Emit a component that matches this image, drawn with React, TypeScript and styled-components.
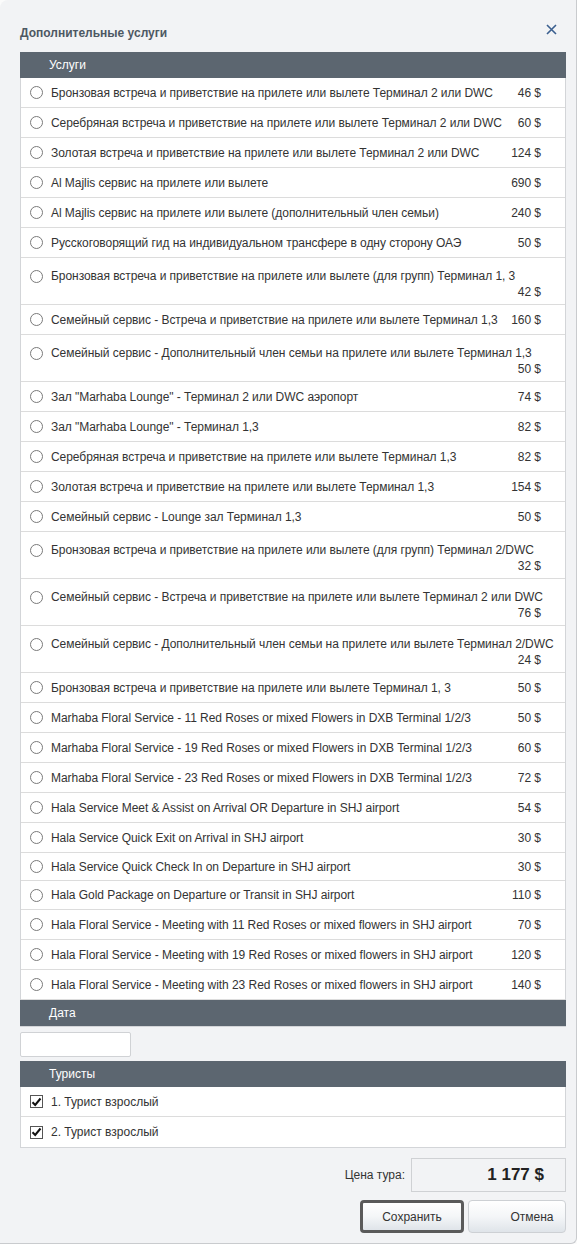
import React from "react";
import styled, { createGlobalStyle } from "styled-components";

const Global = createGlobalStyle`
  html, body { margin: 0; padding: 0; background: #fbfbfb; }
  * { box-sizing: border-box; }
  body { font-family: "Liberation Sans", Arial, sans-serif; font-size: 12px; color: #333; }
`;

const Dialog = styled.div`
  width: 577px;
  height: 1244px;
  background: #f2f3f5;
  border: 1px solid #c9cbce;
  border-top: none;
  border-left: none;
  border-radius: 8px 0 6px 0;
  padding: 0 10px 0 20px;
  display: flex;
  flex-direction: column;
`;

const TitleBar = styled.div`
  height: 52px;
  display: flex;
  align-items: center;
  justify-content: space-between;
  padding-top: 14px;
`;

const Title = styled.div`
  font-weight: bold;
  font-size: 12px;
  color: #4d5863;
`;

const Close = styled.button`
  border: none;
  background: none;
  padding: 0;
  margin: 0 8px 8px 0;
  width: 14px;
  height: 14px;
  display: flex;
  align-items: center;
  justify-content: center;
  cursor: pointer;
`;

const Panel = styled.div`
  background: #fff;
  border: 1px solid #d3d5d8;
  border-top: none;
`;

const SectionBar = styled.div`
  height: 26px;
  background: #5c6670;
  color: #fff;
  display: flex;
  align-items: center;
  padding-left: 29px;
  font-size: 12px;
  margin: 0 -1px;
`;

const Row = styled.label<{ $wrapped?: boolean; $h?: number }>`
  display: grid;
  grid-template-columns: 13px minmax(0, 1fr) auto;
  column-gap: 8px;
  align-items: ${(p) => (p.$wrapped ? "start" : "center")};
  align-content: ${(p) => (p.$wrapped ? "start" : "center")};
  height: ${(p) => (p.$h ? `${p.$h}px` : p.$wrapped ? "47px" : "30px")};
  padding: ${(p) => (p.$wrapped ? "10px 24px 0 9px" : "0 24px 0 9px")};
  border-bottom: 1px solid #dcdcdc;
  line-height: 16px;
  letter-spacing: -0.05px;
  cursor: pointer;
  &:last-child { border-bottom: none; }
`;

const RadioWrap = styled.span`
  display: flex;
  align-items: center;
  height: 16px;
`;

const Radio = styled.span`
  width: 13px;
  height: 13px;
  border-radius: 50%;
  border: 1px solid #7a7a7a;
  background: #fff;
`;

const Label = styled.span`
  white-space: nowrap;
  color: #333;
  overflow: visible;
`;

const Price = styled.span<{ $wrapped?: boolean }>`
  white-space: nowrap;
  text-align: right;
  color: #333;
  ${(p) => (p.$wrapped ? "grid-column: 1 / -1;" : "")}
`;

const DateInput = styled.input`
  width: 111px;
  height: 25px;
  margin: 5px 0 4px 0;
  border: 1px solid #d0d2d5;
  border-radius: 2px;
  background: #fff;
  outline: none;
`;

const CheckRow = styled.label`
  display: flex;
  align-items: center;
  height: 30px;
  padding-left: 9px;
  border-bottom: 1px solid #dcdcdc;
  &:last-child { border-bottom: none; }
`;

const Check = styled.span`
  width: 13px;
  height: 13px;
  border: 1px solid #555;
  background: #fff;
  margin-right: 8px;
  display: flex;
  align-items: center;
  justify-content: center;
  flex: none;
`;

const Footer = styled.div`
  display: flex;
  flex-direction: column;
  align-items: flex-end;
  margin-top: 10px;
  gap: 8px;
`;

const PriceLine = styled.div`
  display: flex;
  align-items: center;
  gap: 6px;
`;

const PriceLabel = styled.span`
  color: #333;
  font-size: 12px;
`;

const PriceBox = styled.div`
  width: 155px;
  height: 34px;
  border: 1px solid #cfd1d4;
  background: #f2f3f5;
  display: flex;
  align-items: center;
  justify-content: flex-end;
  padding-right: 21px;
  font-size: 17px;
  font-weight: bold;
  color: #222;
`;

const Buttons = styled.div`
  display: flex;
  gap: 4px;
`;

const Button = styled.button<{ $primary?: boolean }>`
  height: 33px;
  width: ${(p) => (p.$primary ? "104px" : "98px")};
  font-family: "Liberation Sans", Arial, sans-serif;
  font-size: 12px;
  color: #333;
  border-radius: 4px;
  background: linear-gradient(#ffffff 0%, #f4f6f8 50%, #dfe4e9 100%);
  border: ${(p) => (p.$primary ? "3px solid #5a5a5a" : "1px solid #cdd0d4")};
  padding: ${(p) => (p.$primary ? "0" : "0 0 0 30px")};
  cursor: pointer;
`;

type Item = { name: string; price: number; wrapped?: boolean; h?: number };

const items: Item[] = [
  { name: "Бронзовая встреча и приветствие на прилете или вылете Терминал 2 или DWC", price: 46 },
  { name: "Серебряная встреча и приветствие на прилете или вылете Терминал 2 или DWC", price: 60 },
  { name: "Золотая встреча и приветствие на прилете или вылете Терминал 2 или DWC", price: 124 },
  { name: "Al Majlis сервис на прилете или вылете", price: 690 },
  { name: "Al Majlis сервис на прилете или вылете (дополнительный член семьи)", price: 240 },
  { name: "Русскоговорящий гид на индивидуальном трансфере в одну сторону ОАЭ", price: 50 },
  { name: "Бронзовая встреча и приветствие на прилете или вылете (для групп) Терминал 1, 3", price: 42, wrapped: true },
  { name: "Семейный сервис - Встреча и приветствие на прилете или вылете Терминал 1,3", price: 160 },
  { name: "Семейный сервис - Дополнительный член семьи на прилете или вылете Терминал 1,3", price: 50, wrapped: true },
  { name: "Зал \"Marhaba Lounge\" - Терминал 2 или DWC аэропорт", price: 74 },
  { name: "Зал \"Marhaba Lounge\" - Терминал 1,3", price: 82 },
  { name: "Серебряная встреча и приветствие на прилете или вылете Терминал 1,3", price: 82 },
  { name: "Золотая встреча и приветствие на прилете или вылете Терминал 1,3", price: 154 },
  { name: "Семейный сервис - Lounge зал Терминал 1,3", price: 50 },
  { name: "Бронзовая встреча и приветствие на прилете или вылете (для групп) Терминал 2/DWC", price: 32, wrapped: true },
  { name: "Семейный сервис - Встреча и приветствие на прилете или вылете Терминал 2 или DWC", price: 76, wrapped: true },
  { name: "Семейный сервис - Дополнительный член семьи на прилете или вылете Терминал 2/DWC", price: 24, wrapped: true },
  { name: "Бронзовая встреча и приветствие на прилете или вылете Терминал 1, 3", price: 50 },
  { name: "Marhaba Floral Service - 11 Red Roses or mixed Flowers in DXB Terminal 1/2/3", price: 50 },
  { name: "Marhaba Floral Service - 19 Red Roses or mixed Flowers in DXB Terminal 1/2/3", price: 60 },
  { name: "Marhaba Floral Service - 23 Red Roses or mixed Flowers in DXB Terminal 1/2/3", price: 72 },
  { name: "Hala Service Meet & Assist on Arrival OR Departure in SHJ airport", price: 54 },
  { name: "Hala Service Quick Exit on Arrival in SHJ airport", price: 30 },
  { name: "Hala Service Quick Check In on Departure in SHJ airport", price: 30, h: 28 },
  { name: "Hala Gold Package on Departure or Transit in SHJ airport", price: 110, h: 29 },
  { name: "Hala Floral Service - Meeting with 11 Red Roses or mixed flowers in SHJ airport", price: 70 },
  { name: "Hala Floral Service - Meeting with 19 Red Roses or mixed flowers in SHJ airport", price: 120 },
  { name: "Hala Floral Service - Meeting with 23 Red Roses or mixed flowers in SHJ airport", price: 140 },
];

const tourists = ["1. Турист взрослый", "2. Турист взрослый"];

export default function App() {
  return (
    <>
      <Global />
      <Dialog>
        <TitleBar>
          <Title>Дополнительные услуги</Title>
          <Close aria-label="close">
            <svg width="11" height="11" viewBox="0 0 11 11">
              <path d="M1 1L10 10M10 1L1 10" stroke="#3b5f8f" strokeWidth="1.6" />
            </svg>
          </Close>
        </TitleBar>
        <Panel>
          <SectionBar>Услуги</SectionBar>
          {items.map((it, i) => (
            <Row key={i} $wrapped={it.wrapped} $h={it.h}>
              <RadioWrap>
                <Radio />
              </RadioWrap>
              <Label>{it.name}</Label>
              <Price $wrapped={it.wrapped}>{it.price} $</Price>
            </Row>
          ))}
          <SectionBar>Дата</SectionBar>
        </Panel>
        <DateInput />
        <Panel>
          <SectionBar>Туристы</SectionBar>
          {tourists.map((t) => (
            <CheckRow key={t}>
              <Check>
                <svg width="11" height="10" viewBox="0 0 11 10">
                  <path d="M1.5 5.2L4.2 8L9.5 1.5" stroke="#111" strokeWidth="2" fill="none" />
                </svg>
              </Check>
              {t}
            </CheckRow>
          ))}
        </Panel>
        <Footer>
          <PriceLine>
            <PriceLabel>Цена тура:</PriceLabel>
            <PriceBox>1 177 $</PriceBox>
          </PriceLine>
          <Buttons>
            <Button $primary>Сохранить</Button>
            <Button>Отмена</Button>
          </Buttons>
        </Footer>
      </Dialog>
    </>
  );
}
